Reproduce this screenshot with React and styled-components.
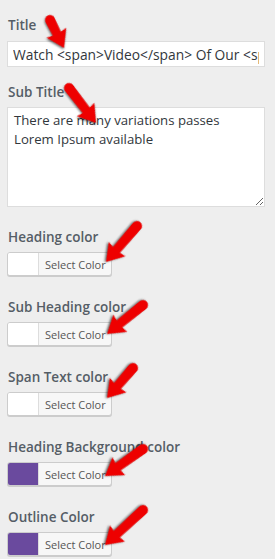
import React from 'react';
import styled, { createGlobalStyle } from 'styled-components';

const Global = createGlobalStyle`
    html, body {
        margin: 0;
        padding: 0;
        background: #eeeeee;
    }
    body {
        font-family: "Open Sans", "Noto Sans", sans-serif;
    }
`;

const Panel = styled.div`
    position: relative;
    display: flex;
    flex-direction: column;
    width: 275px;
    min-height: 559px;
    padding: 15px 10px 0 7px;
    box-sizing: border-box;
    overflow: hidden;
`;

const Field = styled.div`
    display: flex;
    flex-direction: column;
    align-items: flex-start;
    margin-bottom: ${props => props.$gap || 21}px;
`;

const Label = styled.label`
    display: block;
    font-size: 13.5px;
    line-height: 20px;
    font-weight: 600;
    color: #555d66;
    margin-bottom: ${props => props.$gap || 5}px;
    padding-left: 1px;
    white-space: nowrap;
`;

const TextInput = styled.input`
    width: 258px;
    height: 26px;
    box-sizing: border-box;
    padding: 0 5px;
    border: 1px solid #dddddd;
    background: #ffffff;
    color: #32373c;
    font-family: inherit;
    font-size: 13.8px;
    outline: none;
`;

const TextArea = styled.textarea`
    width: 258px;
    height: 100px;
    box-sizing: border-box;
    padding: 3px 6px;
    border: 1px solid #dddddd;
    background: #ffffff;
    color: #32373c;
    font-family: inherit;
    font-size: 13.2px;
    line-height: 19px;
    resize: vertical;
    outline: none;
`;

const ColorButton = styled.button`
    display: flex;
    align-items: stretch;
    height: 24px;
    padding: 0;
    border: 1px solid #cccccc;
    border-radius: 3px;
    background: #f7f7f7;
    box-shadow: 0 1px 0 #cccccc;
    overflow: hidden;
    cursor: pointer;
`;

const Swatch = styled.span`
    width: 30px;
    background: ${props => props.$color};
    border-right: 1px solid #dddddd;
`;

const ButtonText = styled.span`
    display: flex;
    align-items: center;
    padding: 0 5px 0 6px;
    font-family: "Open Sans", "Noto Sans", sans-serif;
    font-size: 11px;
    color: #555555;
`;

const ArrowWrap = styled.div`
    position: absolute;
    left: ${props => props.$x}px;
    top: ${props => props.$y}px;
    width: 0;
    height: 0;
    transform: rotate(${props => props.$angle}deg);
    transform-origin: 0 0;
    pointer-events: none;
    filter: drop-shadow(1.5px 1.5px 1px rgba(0, 0, 0, 0.6));

    svg {
        position: absolute;
        left: -6px;
        top: -12px;
    }
`;

const Arrow = ({ from, to }) => {
    const dx = to[0] - from[0];
    const dy = to[1] - from[1];
    const L = Math.sqrt(dx * dx + dy * dy);
    const angle = (Math.atan2(dy, dx) * 180) / Math.PI;
    const e = 6 + L;
    const d = `M6,7 L${e - 16},7.5 L${e - 17},1 L${e},12 L${e - 17},23 L${e - 16},16.5 L6,17 A5,5 0 0 1 6,7 Z`;
    return (
        <ArrowWrap $x={from[0]} $y={from[1]} $angle={angle}>
            <svg width={L + 8} height={24} viewBox={`0 0 ${L + 8} 24`}>
                <path d={d} fill="#ee0000" />
            </svg>
        </ArrowWrap>
    );
};

const colorFields = [
    { label: 'Heading color', color: '#ffffff' },
    { label: 'Sub Heading color', color: '#ffffff' },
    { label: 'Span Text color', color: '#ffffff' },
    { label: 'Heading Background color', color: '#6a4a9e' },
    { label: 'Outline Color', color: '#6a4a9e' },
];

const arrows = [
    { from: [50, 20], to: [64, 48] },
    { from: [69, 88], to: [96, 123] },
    { from: [137, 226], to: [106, 262] },
    { from: [143, 305], to: [107, 334] },
    { from: [133, 368], to: [107, 398] },
    { from: [143, 449], to: [105, 476] },
    { from: [143, 510], to: [105, 545] },
];

const App = () => {
    return (
        <Panel>
            <Global />
            <Field $gap={15}>
                <Label $gap={6}>Title</Label>
                <TextInput readOnly value="Watch <span>Video</span> Of Our <span>Products</span>" />
            </Field>
            <Field $gap={20}>
                <Label>Sub Title</Label>
                <TextArea readOnly value={'There are many variations passes\nLorem Ipsum available'} />
            </Field>
            {colorFields.map(f => (
                <Field key={f.label}>
                    <Label>{f.label}</Label>
                    <ColorButton>
                        <Swatch $color={f.color} />
                        <ButtonText>Select Color</ButtonText>
                    </ColorButton>
                </Field>
            ))}
            {arrows.map((a, i) => (
                <Arrow key={i} from={a.from} to={a.to} />
            ))}
        </Panel>
    );
};

export default App;
